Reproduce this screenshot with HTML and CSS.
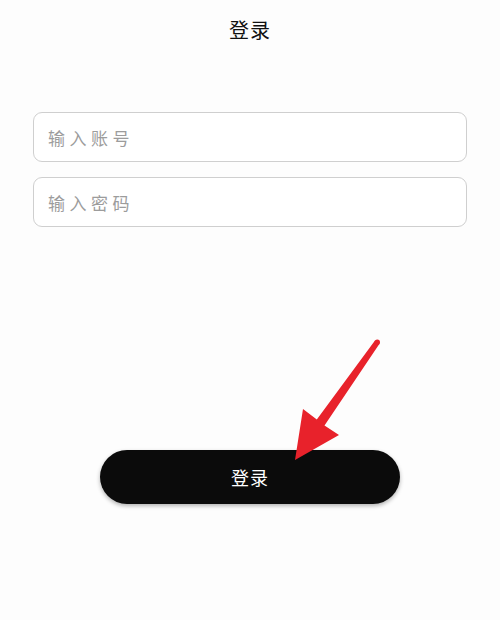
FILE: index.html
```html
<!DOCTYPE html>
<html lang="zh-CN">
<head>
  <meta charset="UTF-8" />
  <meta name="viewport" content="width=device-width, initial-scale=1.0" />
  <title>登录</title>
  <link rel="stylesheet" href="styles.css">
</head>
<body>

  <div class="page">
    <header class="title-bar">
      <h1>登录</h1>
    </header>

    <form class="login-form" onsubmit="return false">
      <input class="field" type="text" placeholder="输入账号" />
      <input class="field" type="password" placeholder="输入密码" />
      <button class="login-btn" type="submit">登录</button>
    </form>

    <svg class="pointer-arrow" viewBox="0 0 500 620" width="500" height="620">
      <polygon fill="#e8222b"
        points="295,460 303,409 316.8,419.5 375,340.6 379.5,343.8 324.5,425.5 339,435" />
      <circle cx="377.3" cy="342.2" r="2.7" fill="#e8222b" />
    </svg>
  </div>

</body>
</html>
```

FILE: styles.css
```css
* {
  box-sizing: border-box;
}

body {
  margin: 0;
  padding: 0;
  background: #fdfdfd;
  font-family: "Noto Sans CJK SC", "Noto Sans", sans-serif;
  color: #111;
}

.page {
  position: relative;
  width: 500px;
  height: 620px;
  overflow: hidden;
}

.title-bar {
  height: 58px;
  display: flex;
  align-items: center;
  justify-content: center;
}

.title-bar h1 {
  margin: 0;
  font-size: 20px;
  font-weight: 400;
  letter-spacing: 1px;
}

.login-form {
  display: flex;
  flex-direction: column;
  align-items: center;
  gap: 15px;
  padding: 54px 33px 0;
}

.field {
  width: 100%;
  height: 50px;
  padding: 0 14px;
  border: 1px solid #cfcfcf;
  border-radius: 9px;
  background: #fff;
  font-family: inherit;
  font-size: 17px;
  letter-spacing: 4.5px;
  color: #333;
  outline: none;
}

.field::placeholder {
  color: #9c9c9c;
}

.login-btn {
  width: 300px;
  height: 54px;
  margin-top: 208px;
  border: none;
  border-radius: 27px;
  background: #0b0b0b;
  color: #fff;
  font-family: inherit;
  font-size: 18px;
  letter-spacing: 1px;
  box-shadow: 0 2px 4px rgba(0, 0, 0, 0.3);
  cursor: pointer;
}

.pointer-arrow {
  position: absolute;
  left: 0;
  top: 0;
  pointer-events: none;
}
```
